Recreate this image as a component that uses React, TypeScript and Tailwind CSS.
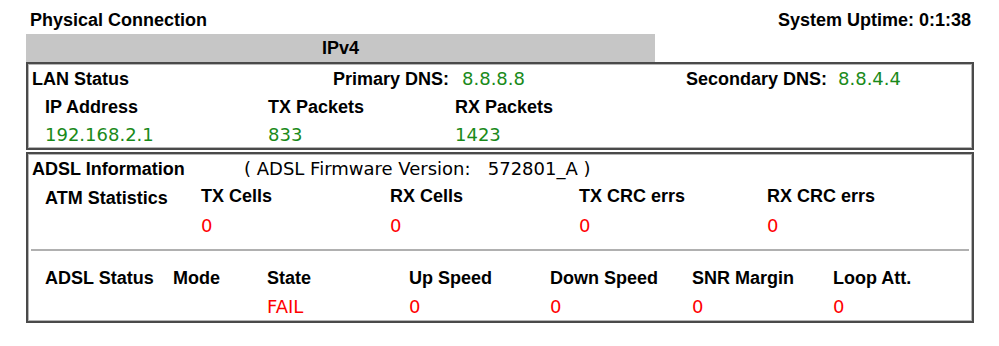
const label = "font-['Liberation_Sans',Arial,sans-serif] font-bold text-[18px] text-black leading-none"
const value = "font-['DejaVu_Sans',Verdana,sans-serif] text-[18px] leading-none"

function Box({ children, className = '' }: { children: React.ReactNode; className?: string }) {
  return (
    <div className={`border-2 border-[#4a4a4a] ${className}`}>
      <div className="border border-[#b5b5b5] h-full">{children}</div>
    </div>
  )
}

export default function App() {
  const atm = ['TX Cells', 'RX Cells', 'TX CRC errs', 'RX CRC errs']
  const adsl = [
    { name: 'Mode', val: '' },
    { name: 'State', val: 'FAIL' },
    { name: 'Up Speed', val: '0' },
    { name: 'Down Speed', val: '0' },
    { name: 'SNR Margin', val: '0' },
    { name: 'Loop Att.', val: '0' },
  ]

  return (
    <div className="w-[999px] h-[346px] bg-white pl-[26px] pr-[25px]">
      {/* Header */}
      <div className="h-[34px] flex items-center justify-between pl-[4px] pr-[3px] pt-[6px]">
        <span className={label}>Physical Connection</span>
        <span className={label}>System Uptime: 0:1:38</span>
      </div>

      <div className="w-[629px] h-[28px] bg-[#c6c6c6] flex items-center justify-center">
        <span className={label}>IPv4</span>
      </div>

      {/* LAN */}
      <Box className="h-[88px]">
        <div className="h-[28px] flex items-center pl-[3px]">
          <span className={`${label} w-[287px]`}>LAN Status</span>
          <span className={`${label} w-[130px] text-right`}>Primary DNS:</span>
          <span className={`${value} text-[#1a8a1a] ml-[13px] w-[224px]`}>8.8.8.8</span>
          <span className={`${label} w-[152px]`}>Secondary DNS:</span>
          <span className={`${value} text-[#1a8a1a]`}>8.8.4.4</span>
        </div>
        <div className="grid grid-cols-[223px_187px_1fr] pl-[16px]">
          <div className="h-[28px] flex items-center"><span className={label}>IP Address</span></div>
          <div className="h-[28px] flex items-center"><span className={label}>TX Packets</span></div>
          <div className="h-[28px] flex items-center"><span className={label}>RX Packets</span></div>
          <div className="h-[28px] flex items-center"><span className={`${value} text-[#1a8a1a]`}>192.168.2.1</span></div>
          <div className="h-[28px] flex items-center"><span className={`${value} text-[#1a8a1a]`}>833</span></div>
          <div className="h-[28px] flex items-center"><span className={`${value} text-[#1a8a1a]`}>1423</span></div>
        </div>
      </Box>

      {/* ADSL */}
      <Box className="mt-[2px] h-[171px]">
        <div className="h-[28px] flex items-center pl-[3px]">
          <span className={`${label} w-[212px]`}>ADSL Information</span>
          <span className={`${value} text-black whitespace-pre`}>( ADSL Firmware Version:   572801_A )</span>
        </div>
        <div className="grid grid-cols-[156px_189px_189px_188px_1fr] pl-[16px]">
          <div className="h-[26px] flex items-center pt-[3px]"><span className={label}>ATM Statistics</span></div>
          {atm.map(a => (
            <div key={a} className="h-[26px] flex items-center"><span className={label}>{a}</span></div>
          ))}
          <div className="h-[34px]" />
          {atm.map(a => (
            <div key={a} className="h-[34px] flex items-center"><span className={`${value} text-[#ff0000]`}>0</span></div>
          ))}
        </div>
        <div className="mx-[2px] mt-[6px] h-[2px] bg-[#b0b0b0]" />
        <div className="grid grid-cols-[128px_94px_142px_141px_142px_141px_1fr] pl-[16px] pt-[13px]">
          <div className="h-[28px] flex items-center"><span className={label}>ADSL Status</span></div>
          {adsl.map(a => (
            <div key={a.name} className="h-[28px] flex items-center"><span className={label}>{a.name}</span></div>
          ))}
          <div className="h-[30px]" />
          {adsl.map(a => (
            <div key={a.name} className="h-[30px] flex items-center"><span className={`${value} text-[#ff0000]`}>{a.val}</span></div>
          ))}
        </div>
      </Box>
    </div>
  )
}
